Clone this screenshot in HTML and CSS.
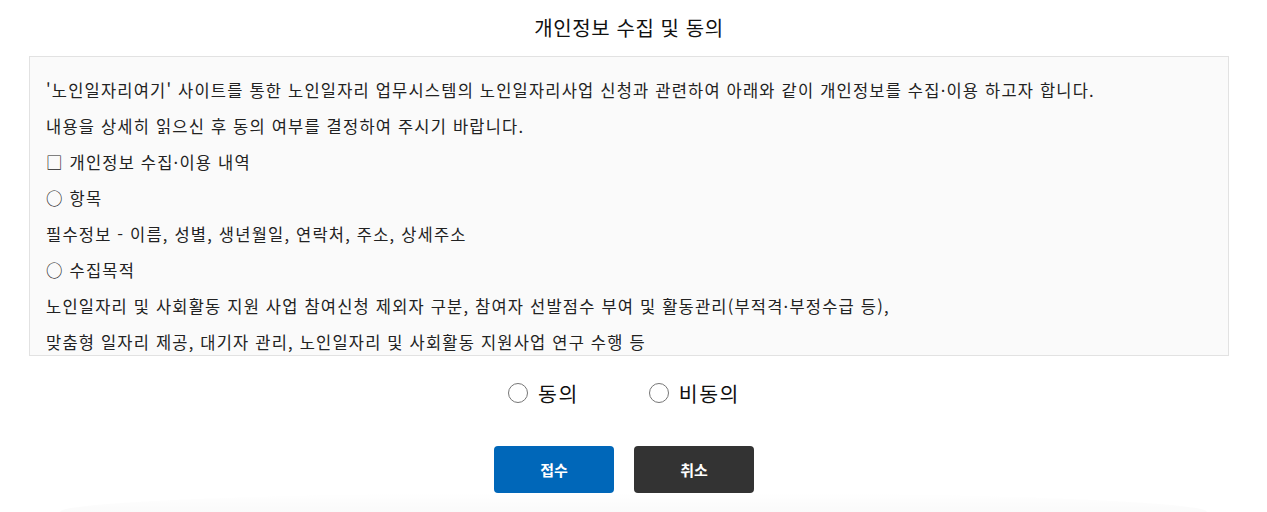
FILE: index.html
```html
<!DOCTYPE html>
<html lang="ko">
<head>
<meta charset="utf-8">
<title>개인정보 수집 및 동의</title>
<link rel="stylesheet" href="styles.css">
</head>
<body>
<div class="page">
  <h1 class="title">개인정보 수집 및 동의</h1>
  <div class="terms">
    <p>'노인일자리여기' 사이트를 통한 노인일자리 업무시스템의 노인일자리사업 신청과 관련하여 아래와 같이 개인정보를 수집·이용 하고자 합니다.</p>
    <p>내용을 상세히 읽으신 후 동의 여부를 결정하여 주시기 바랍니다.</p>
    <p>□ 개인정보 수집·이용 내역</p>
    <p>○ 항목</p>
    <p>필수정보 - 이름, 성별, 생년월일, 연락처, 주소, 상세주소</p>
    <p>○ 수집목적</p>
    <p>노인일자리 및 사회활동 지원 사업 참여신청 제외자 구분, 참여자 선발점수 부여 및 활동관리(부적격·부정수급 등),</p>
    <p>맞춤형 일자리 제공, 대기자 관리, 노인일자리 및 사회활동 지원사업 연구 수행 등</p>
  </div>
  <div class="choices">
    <label class="choice"><span class="radio"></span><span class="choice-text">동의</span></label>
    <label class="choice"><span class="radio"></span><span class="choice-text">비동의</span></label>
  </div>
  <div class="actions">
    <button class="btn btn-primary" type="button">접수</button>
    <button class="btn btn-dark" type="button">취소</button>
  </div>
</div>
<div class="shade"></div>
</body>
</html>
```
FILE: styles.css
```css
html, body {
  margin: 0;
  padding: 0;
  background: #fff;
}
body {
  font-family: "Noto Sans CJK KR", "Noto Sans", sans-serif;
  color: #222;
  height: 512px;
  overflow: hidden;
  position: relative;
}
.page {
  width: 1200px;
  margin-left: 29px;
  padding-top: 14px;
}
.title {
  margin: 0;
  text-align: center;
  font-size: 20px;
  font-weight: 400;
  line-height: 28px;
  letter-spacing: 0.6px;
  color: #111;
}
.terms {
  margin-top: 14px;
  box-sizing: border-box;
  height: 300px;
  border: 1px solid #e2e2e2;
  background: #fafafa;
  padding: 15px 16px 0;
  overflow: hidden;
}
.terms p {
  margin: 0;
  font-size: 16.5px;
  line-height: 36px;
  letter-spacing: 1.2px;
  white-space: nowrap;
}
.choices {
  display: flex;
  justify-content: center;
  gap: 70px;
  padding-right: 10px;
  margin-top: 21px;
  height: 32px;
  align-items: center;
}
.choice {
  display: flex;
  align-items: center;
  gap: 10px;
}
.radio {
  width: 18px;
  height: 18px;
  border: 1px solid #767676;
  border-radius: 50%;
  background: #fff;
}
.choice-text {
  font-size: 20.5px;
  font-weight: 400;
  letter-spacing: 1.5px;
  color: #111;
}
.actions {
  display: flex;
  justify-content: center;
  gap: 20px;
  padding-right: 10px;
  margin-top: 37px;
}
.btn {
  width: 120px;
  height: 47px;
  border: 0;
  border-radius: 4px;
  color: #fff;
  font-family: "Noto Sans CJK KR", sans-serif;
  font-size: 15px;
  font-weight: 700;
  cursor: pointer;
}
.btn-primary { background: #0067b9; }
.btn-dark { background: #333; }
.shade {
  position: absolute;
  left: 60px;
  right: 60px;
  bottom: 0;
  height: 20px;
  background: linear-gradient(to bottom, rgba(0,0,0,0), rgba(0,0,0,0.02));
  border-radius: 50% 50% 0 0 / 100% 100% 0 0;
}
```
